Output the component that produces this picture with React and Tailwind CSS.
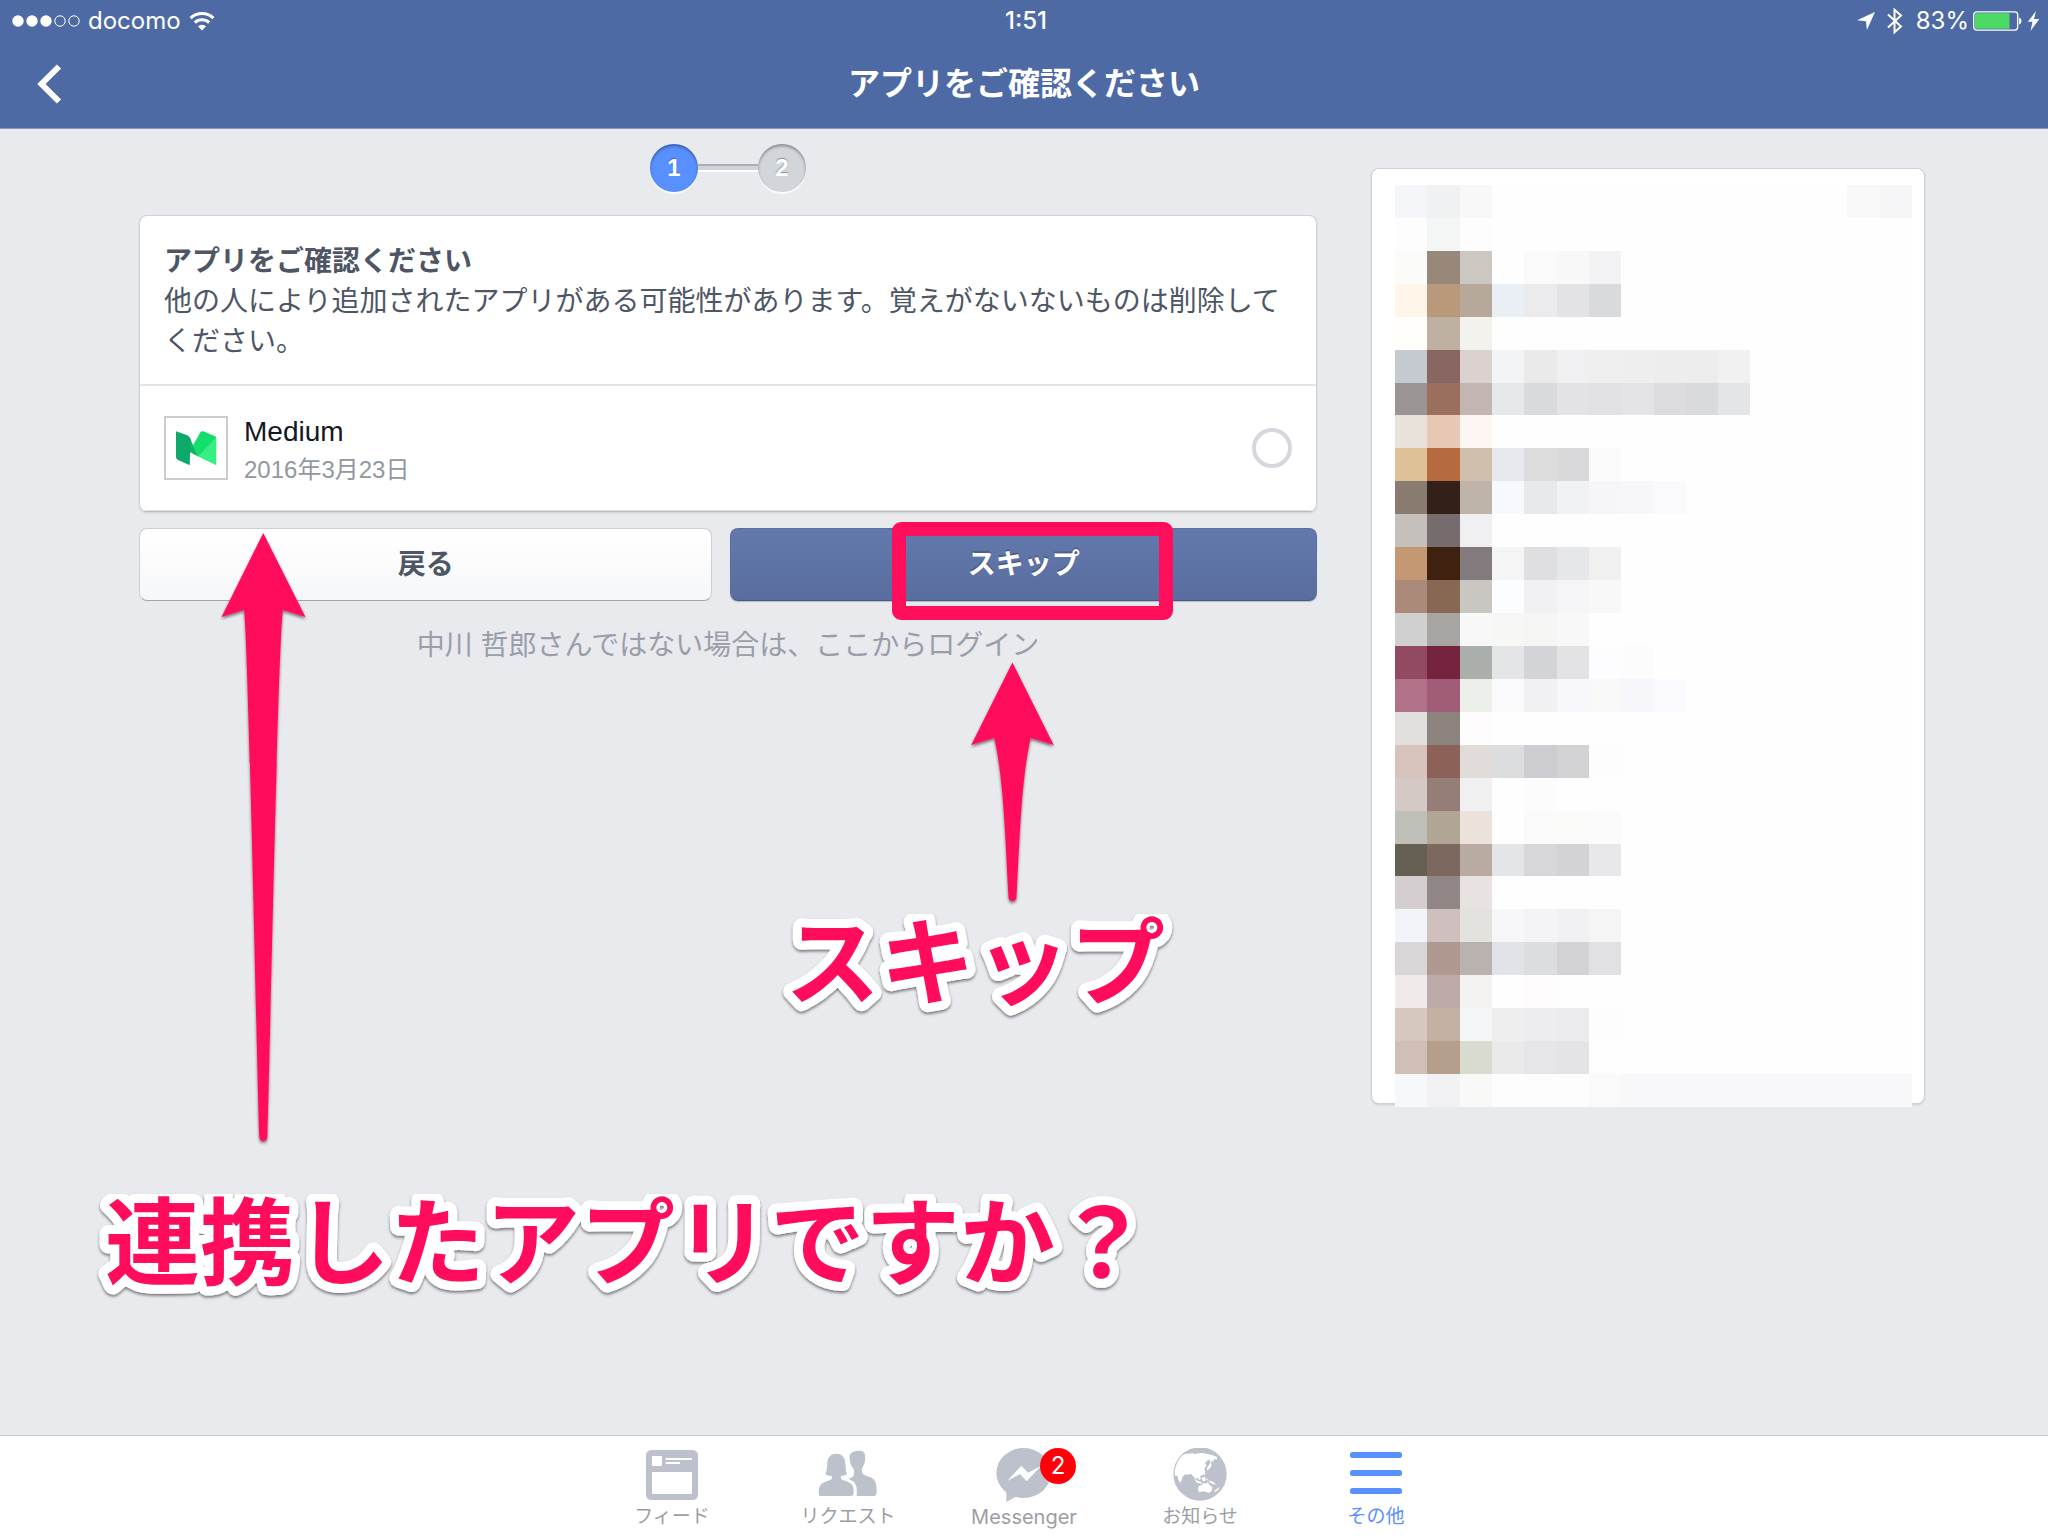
import React from "react";

// Pixelated contact list: one row per line, colours from the left edge
const mosaic = [
  ["#f5f6f9", "#f0f1f3", "#f8f8f8", "", "", "", "", "", "", "", "", "", "", "", "#f9f9f9", "#f6f6f8"],
  ["#fdfdfd", "#f4f6f5", "#fdfdfd"],
  ["#fbfbf9", "#98887a", "#ccc7c1", "", "#fafafa", "#f8f8f8", "#f3f3f6"],
  ["#fff6ea", "#ba987a", "#b6a99b", "#eaeef5", "#ebebed", "#e3e3e5", "#d9dadc"],
  ["#fffefb", "#bfb1a1", "#f4f2ed"],
  ["#c5cad1", "#886661", "#dbd2d0", "#f3f4f6", "#eaeaeb", "#f0f0f2", "#eeefee", "#eeeeee", "#ededed", "#ededed", "#f1f1f1"],
  ["#9a9594", "#9c6e5d", "#c3b5b2", "#e5e9ec", "#d9dadc", "#e3e3e5", "#e1e1e3", "#e4e4e6", "#dcdcde", "#d9dadc", "#e4e5e7"],
  ["#e8e2db", "#e8c8b4", "#fdf7f4"],
  ["#dfc197", "#b56b3f", "#d1bfae", "#e6eaef", "#dcdcdd", "#d9d9db", "#fafafa"],
  ["#897b6f", "#332019", "#bfb4aa", "#f6f9fd", "#e7e9ea", "#f1f2f4", "#f6f6f8", "#f7f7f9", "#fafafd"],
  ["#c5c0bc", "#766c6e", "#f0eff2"],
  ["#c59874", "#3f2110", "#817b7e", "#f5f5f5", "#dfdfe2", "#e6e7ea", "#f0f0f1"],
  ["#ab8a7a", "#886753", "#cac6c1", "#fbfdff", "#f1f1f3", "#f5f5f8", "#f8f8f8"],
  ["#d0d0d0", "#a7a5a1", "#f8f8f8", "#f7f7f6", "#f5f5f4", "#f8f8f8"],
  ["#914a62", "#74243f", "#abafac", "#e4e5e7", "#d3d4d8", "#e3e3e6", "#fdfdff", "#fcfcfd"],
  ["#b17188", "#a15c78", "#ecefea", "#fafafd", "#f1f1f3", "#f8f8fc", "#f9f9fa", "#f7f7fb", "#fbfbff"],
  ["#e1e0df", "#8d8480", "#fffcfd"],
  ["#d7c3bc", "#8b6158", "#e1dcda", "#dcddde", "#cdccd1", "#d3d3d5", "#fdfdfd"],
  ["#d5c9c6", "#947e77", "#f0f0f1", "", "#fcfcfc"],
  ["#bebfb7", "#b0a693", "#ebe2dc", "", "#fafafa", "#fafaf9", "#fbfbfb"],
  ["#665f53", "#7c685f", "#b9aaa2", "#e3e5e9", "#d7d7d9", "#d3d3d5", "#e8e8ea"],
  ["#d4ced0", "#918787", "#e8e3e0"],
  ["#f1f5f9", "#cfc0bd", "#e4e2df", "#f7f7f9", "#f4f3f6", "#f1f0f2", "#f5f5f5"],
  ["#d9d6d8", "#ae9890", "#b9b2ae", "#e0e4e8", "#dcddde", "#d3d3d5", "#e1e1e3"],
  ["#efe9e9", "#bbaaa8", "#f5f3f1", "", "#fffcfd"],
  ["#d6c7bf", "#c3b0a3", "#f3f5f7", "#eeeeee", "#ededef", "#ebebed", "#fdfdfd"],
  ["#d0bfb6", "#b69e8c", "#d9dbcf", "#eaeaeb", "#e6e6e8", "#e4e4e6", "#fefefe"],
  ["#f6f8fa", "#f2f2f5", "#f9faf8", "#fdfdfe", "#fdfdfe", "#fdfdfe", "#fafafa", "#f8f8fb", "#f8f8fb", "#f8f8fb", "#f8f8fb", "#f8f8fb", "#f8f8fb", "#f8f8fb", "#f8f8fb", "#f8f8fb"],
];

function Mosaic() {
  return (
    <svg
      viewBox="0 0 16 28"
      preserveAspectRatio="none"
      shapeRendering="crispEdges"
      className="block h-[922px] w-full"
      aria-hidden="true"
    >
      <rect width="16" height="28" fill="#fefefe" />
      {mosaic.map((row, y) =>
        row.map((color, x) =>
          color ? <rect key={`${x}-${y}`} x={x} y={y} width="1" height="1" fill={color} /> : null
        )
      )}
    </svg>
  );
}

function StatusBar() {
  return (
    <div className="grid h-[42px] grid-cols-3 items-center pr-2 pl-3 font-[Inter,sans-serif] text-2xl text-white">
      <div className="flex items-center">
        <svg width="70" height="14" viewBox="0 0 70 14" fill="#fff" aria-hidden="true">
          <circle cx="6" cy="7" r="5.7" />
          <circle cx="20" cy="7" r="5.7" />
          <circle cx="34" cy="7" r="5.7" />
          <circle cx="48" cy="7" r="5.2" fill="none" stroke="#fff" />
          <circle cx="62" cy="7" r="5.2" fill="none" stroke="#fff" />
        </svg>
        <span className="ml-1.5">docomo</span>
        <svg className="ml-2" width="26" height="19" viewBox="0 0 26 19" fill="none" stroke="#fff" strokeWidth="3" aria-hidden="true">
          <path d="M1.6 6.2a16.4 16.4 0 0 1 22.8 0" />
          <path d="M5.8 10.6a10.4 10.4 0 0 1 14.4 0" />
          <path d="M13 18.6L8.9 14.3a6 6 0 0 1 8.2 0z" fill="#fff" stroke="none" />
        </svg>
      </div>
      <span className="text-center font-medium">1:51</span>
      <div className="flex items-center justify-end">
        <svg width="20" height="20" viewBox="0 0 20 20" fill="#fff" aria-hidden="true">
          <path d="M19 1L1 9.3l9 1 .9 8.7z" />
        </svg>
        <svg className="ml-2.5" width="18" height="28" viewBox="0 0 18 28" fill="none" stroke="#fff" strokeWidth="2" aria-hidden="true">
          <path d="M2 7.5l13 12-6.5 5.8V2.7L15 8.5l-13 12" />
        </svg>
        <span className="ml-3">83%</span>
        <svg className="ml-1" width="50" height="20" viewBox="0 0 50 20" aria-hidden="true">
          <rect x="0.7" y="0.9" width="44" height="18.2" rx="3" fill="none" stroke="#fff" strokeWidth="1.3" />
          <rect x="2" y="2.2" width="34.5" height="15.6" rx="1" fill="#4cd964" />
          <path d="M46.2 6.5c3 1 3 6 0 7z" fill="#fff" />
        </svg>
        <svg className="ml-1" width="13" height="20" viewBox="0 0 13 20" fill="#fff" aria-hidden="true">
          <path d="M9 0L0.8 10.8h4.7L3.5 20 12.3 8H7z" />
        </svg>
      </div>
    </div>
  );
}

function Steps() {
  return (
    <ol className="flex items-center justify-center font-['Liberation_Sans',sans-serif] text-2xl font-bold text-white">
      <li className="flex h-12 w-12 items-center justify-center rounded-full bg-[#5890ff] shadow-[inset_0_2px_3px_rgba(0,0,0,0.35),0_2px_0_rgba(255,255,255,0.8)] [text-shadow:0_-1px_1px_rgba(0,0,0,0.25)]">
        1
      </li>
      <li aria-hidden="true" className="h-2 w-[60px] border-t-2 border-b-2 border-t-[#abaeb5] border-b-white bg-[#d0d3d8]" />
      <li className="flex h-12 w-12 items-center justify-center rounded-full bg-[#d2d5da] shadow-[inset_0_2px_3px_rgba(0,0,0,0.35),0_2px_0_rgba(255,255,255,0.8)] [text-shadow:0_-1px_1px_rgba(0,0,0,0.35)]">
        2
      </li>
    </ol>
  );
}

function MediumLogo() {
  return (
    <svg viewBox="138 654 180 180" className="h-full w-full" aria-hidden="true">
      <path d="M168 694l34 12q7 3 10 12l-3 78-36-17q-5-3-5-8z" fill="#0ca96b" />
      <path d="M209 712l10 24 17 34-27-14z" fill="#10b263" />
      <path d="M241 697q3-5 9-3l34 14q5 2 5 6l-53 56-18-32z" fill="#14df6c" />
      <path d="M289 712v84l-53-26z" fill="#36ee82" />
    </svg>
  );
}

// Marks over the page: frame, two arrows and their captions
function Annotations() {
  return (
    <svg
      viewBox="139 129 1177 1200"
      className="pointer-events-none absolute top-0 left-0 h-[1200px] w-[1177px] overflow-visible"
      fill="#ff0f5b"
    >
      <defs>
        <filter id="shade" x="-10%" y="-20%" width="120%" height="150%">
          <feDropShadow dx="0" dy="2" stdDeviation="1.5" floodColor="#000" floodOpacity="0.5" />
        </filter>
        <clipPath id="capSkip">
          <rect x="760" y="914" width="440" height="120" />
        </clipPath>
        <clipPath id="capApp">
          <rect x="80" y="1194" width="1100" height="120" />
        </clipPath>
      </defs>
      <rect x="899" y="529" width="267" height="84" rx="2" fill="none" stroke="#ff0f5b" strokeWidth="14" strokeLinejoin="round" />
      <path filter="url(#shade)" d="M263.3 533L305.5 617 283 610C278 640 269 1100 267.3 1137a4 4 0 0 1-8 0C257.5 1100 248.5 640 244 610L221.5 617z" />
      <path filter="url(#shade)" d="M1012.4 662.5L1053.7 745 1030.7 738C1022 775 1020 830 1016.5 897a4 4 0 0 1-8 0C1005 830 1003 775 994.2 738L971.2 745z" />
      <g
        className="font-['Noto_Sans_CJK_JP',sans-serif] text-[95px] font-bold"
        stroke="#fff"
        strokeWidth="18"
        strokeLinejoin="round"
        paintOrder="stroke"
      >
        <g filter="url(#shade)">
          <g clipPath="url(#capSkip)">
            <text x="785" y="998">スキップ</text>
          </g>
        </g>
        <g filter="url(#shade)">
          <g clipPath="url(#capApp)">
            <text x="105" y="1278">連携したアプリですか？</text>
          </g>
        </g>
      </g>
    </svg>
  );
}

function FeedIcon() {
  return (
    <svg width="52" height="50" viewBox="138 75 156 150" aria-hidden="true">
      <rect x="138" y="75" width="156" height="150" rx="16" fill="#bdc1cb" />
      <g fill="#fff">
        <rect x="156" y="93" width="30" height="30" rx="3" />
        <rect x="197" y="99" width="79" height="6" />
        <rect x="197" y="111" width="43" height="6" />
        <rect x="156" y="141" width="120" height="66" rx="4" />
      </g>
    </svg>
  );
}

function RequestsIcon() {
  return (
    <svg width="60" height="50" viewBox="655 75 180 150" fill="#bdc1cb" aria-hidden="true">
      <path d="M772 78c14-3 24 3 24 14 0 8 1 10 0 16-2 10-6 15-8 20-2 8-1 14 1 18 6 6 26 9 34 18 6 7 8 18 8 38 0 8-3 11-9 11h-51c2-22 0-34-11-44-6-5-11-6-14-8 12-3 17-8 17-15 1-8 0-12-3-17-4-5-7-9-8-15-2-6-2-10-2-14-3-13 6-20 22-22z" />
      <path d="M710 86c16 0 26 10 27 28 1 12 0 20 5 34-6 4-12 5-18 5-2 6 0 9 4 11 10 5 22 6 29 15 4 6 5 13 5 23 0 8-2 11-8 11h-89c-6 0-8-3-8-10 0-10 1-18 6-24 8-9 20-10 30-15 4-2 5-6 3-11-7 0-14-2-19-5 5-12 5-22 6-34 1-18 11-28 27-28z" />
    </svg>
  );
}

function MessengerIcon() {
  return (
    <svg width="56" height="56" viewBox="1187 66 168 168" aria-hidden="true">
      <ellipse cx="1270" cy="144" rx="82" ry="75" fill="#bdc1cb" />
      <path d="M1218 192v39l36-20z" fill="#bdc1cb" />
      <path d="M1221 168l42-46 20 21 39-20-43 46-20-22z" fill="#fff" />
    </svg>
  );
}

function GlobeIcon() {
  return (
    <svg width="54" height="54" viewBox="369 69 162 162" aria-hidden="true">
      <circle cx="450" cy="147" r="80" fill="#bdc1cb" />
      <g fill="#fff" strokeLinejoin="round">
        <path d="M375 152l-1-14q4-27 22-46 8-7 18-6l14-1q8 4 16 0 14-3 26 2 14 0 30 8l2 9-9-2-4 9-5-9-10 3-9 9 5 8-7 7 2 10-6 11-9 3 3 9-6 3-5-9-4 8-7-9-8-8-10 2-8-1-7 8-4 13-4 4-5-9-3-12z" />
        <path d="M432 163l13 5 12 5-2 3-14-3zM456 158l8-3 4 7-6 8-6-5zM470 158l4 6-4 4zM476 166l14 5 8 8-10-2-10-6zM460 142l5-3 1 9-4 3zM478 118l5-7 2 10-6 10-8 5-1-5zM478 104l7-5 2 9-5 4z" />
        <path d="M446 184l10-5 6-5 8 2 3-6 5 9 9 8-1 9-8 8-9-3-10-2-11 3-4-7z" />
        <path d="M492 198l12-9 4-4-3 9-10 7z" />
      </g>
    </svg>
  );
}

function MenuIcon() {
  return (
    <svg width="52" height="50" viewBox="0 0 52 50" fill="#5890ff" aria-hidden="true">
      <rect y="2" width="52" height="6" rx="2.5" />
      <rect y="20" width="52" height="6" rx="2.5" />
      <rect y="38" width="52" height="6" rx="2.5" />
    </svg>
  );
}

const tabs = [
  { label: "フィード", icon: FeedIcon },
  { label: "リクエスト", icon: RequestsIcon },
  { label: "Messenger", icon: MessengerIcon, badge: 2, latin: true },
  { label: "お知らせ", icon: GlobeIcon },
  { label: "その他", icon: MenuIcon, active: true },
];

function TabBar() {
  return (
    <nav className="flex justify-center border-t border-[#c8cad0] bg-white pt-[11px] pb-[5px]">
      {tabs.map(({ label, icon: Icon, badge, latin, active }) => (
        <a key={label} href="#" className="flex w-44 flex-col items-center">
          <span className="relative flex h-14 items-center">
            <Icon />
            {badge && (
              <span className="absolute top-px -right-6 flex h-9 w-9 items-center justify-center rounded-full bg-[#ff0009] font-[Inter,sans-serif] text-2xl text-white">
                {badge}
              </span>
            )}
          </span>
          <span
            className={`font-[Inter,'Noto_Sans_CJK_JP',sans-serif] leading-7 ${
              latin ? "text-xl leading-7" : "text-[19px]"
            } ${active ? "text-[#5890ff]" : "text-[#9b9ea5]"}`}
          >
            {label}
          </span>
        </a>
      ))}
    </nav>
  );
}

export default function App() {
  return (
    <div className="flex min-h-screen flex-col bg-[#e8eaee] font-['Liberation_Sans','Noto_Sans_CJK_JP',sans-serif]">
      <header className="border-b border-[#8c99b5] bg-[#4e6aa4]">
        <StatusBar />
        <div className="grid h-[86px] grid-cols-[1fr_auto_1fr] items-center px-9 pb-0.5">
          <button type="button" aria-label="戻る" className="justify-self-start">
            <svg width="26" height="40" viewBox="0 0 26 40" fill="none" stroke="#fff" strokeWidth="6" aria-hidden="true">
              <path d="M23 2.5L5.5 20 23 37.5" />
            </svg>
          </button>
          <h1 className="text-[32px] font-bold text-white">アプリをご確認ください</h1>
        </div>
      </header>

      <main className="flex flex-1 items-start gap-[54px] pr-[123px] pl-[139px]">
        <section className="relative min-w-0 flex-1 pt-[15px]">
          <Steps />

          <div className="mt-[23px] rounded-lg border border-[#d0d2d7] border-b-[#b9bbc2] bg-white shadow-[0_1px_2px_rgba(0,0,0,0.12)]">
            <div className="border-b-2 border-[#e3e4e7] px-6 pt-[26px] pb-[22px] text-[28px] leading-10 text-[#4e5665]">
              <h2 className="font-bold">アプリをご確認ください</h2>
              <p>
                他の人により追加されたアプリがある可能性があります。覚えがないないものは削除してください。
              </p>
            </div>
            <label className="flex items-center border-b border-[#e3e4e7] px-6 py-[21px]">
              <span className="h-16 w-16 border-2 border-[#cccccc] bg-white">
                <MediumLogo />
              </span>
              <span className="ml-4 flex flex-1 flex-col pt-1.5">
                <span className="text-[28px] leading-[38px] text-[#141823]">Medium</span>
                <span className="text-2xl leading-[38px] text-[#9197a3]">2016年3月23日</span>
              </span>
              <input type="radio" name="app" className="h-10 w-10 appearance-none rounded-full border-4 border-[#d5d7dd] bg-white" />
            </label>
          </div>

          <div className="mt-4 grid grid-cols-[573fr_586fr] gap-[18px] text-[28px] font-bold">
            <button
              type="button"
              className="h-[73px] rounded-lg border border-[#cdced3] border-b-[#a3a6ad] bg-linear-to-b from-white to-[#f6f7f9] text-[#4e5665]"
            >
              戻る
            </button>
            <button
              type="button"
              className="h-[73px] rounded-lg border border-[#5a6f9f] border-b-[#475a86] bg-linear-to-b from-[#6379ad] to-[#596e9e] text-white shadow-[0_1px_1px_rgba(0,0,0,0.2)] [text-shadow:0_-2px_0_rgba(0,0,0,0.2)]"
            >
              スキップ
            </button>
          </div>

          <p className="mt-[25px] text-center text-[28px] leading-10">
            <a href="#" className="text-[#9a9eaa]">
              中川 哲郎さんではない場合は、ここからログイン
            </a>
          </p>

          <Annotations />
        </section>

        <aside className="mt-[39px] w-[554px] rounded-lg border border-[#cfd1d7] bg-white pt-4 pr-3 pl-[23px] shadow-[0_1px_2px_rgba(0,0,0,0.12)]">
          <div className="-mb-1">
            <Mosaic />
          </div>
        </aside>
      </main>

      <TabBar />
    </div>
  );
}
